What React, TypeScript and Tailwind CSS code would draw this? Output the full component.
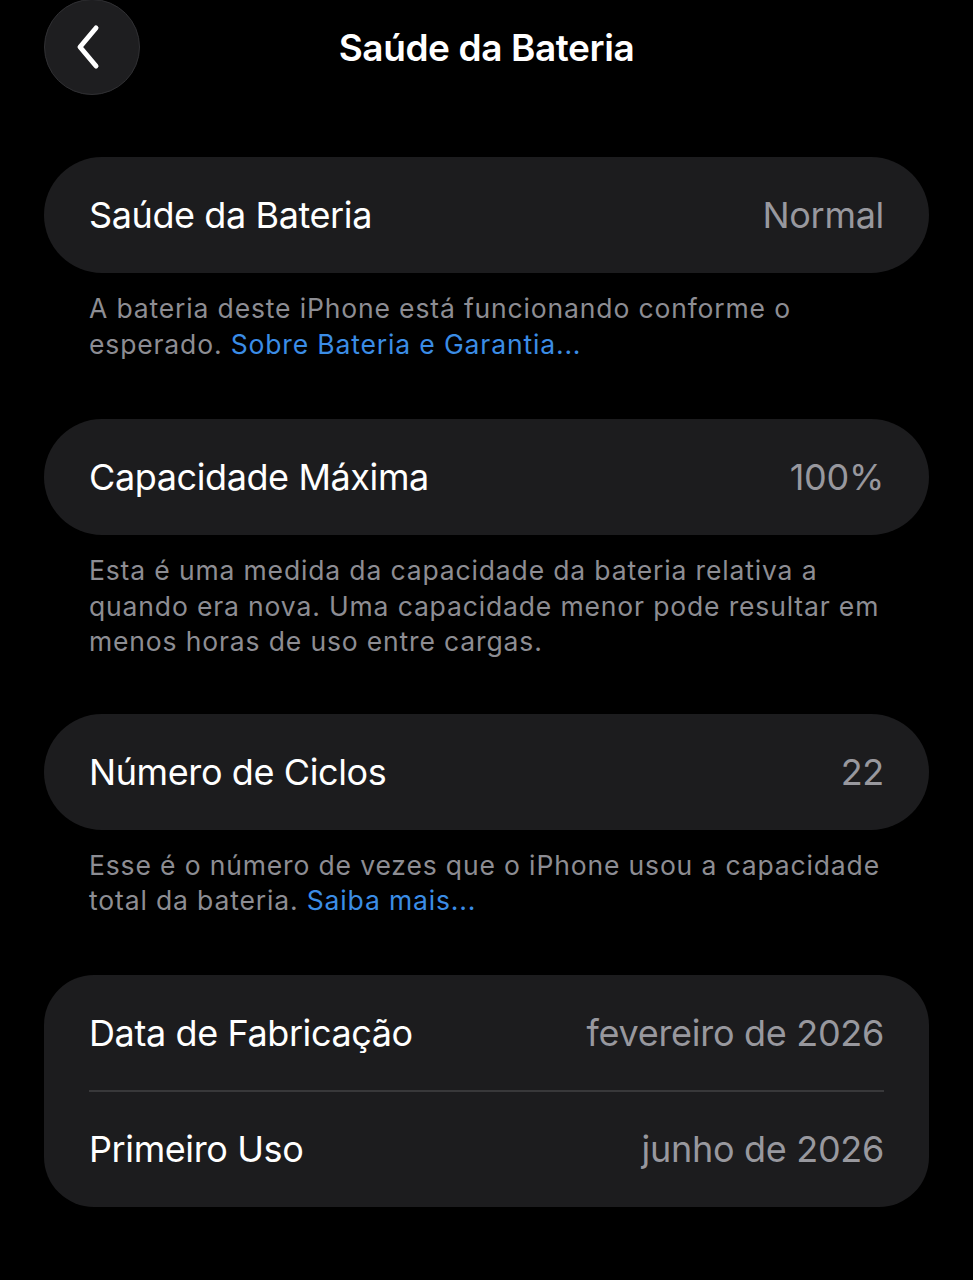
import React from "react";

const font = { fontFamily: "Inter, 'Noto Sans', sans-serif" };

function Row({ label, value }: { label: string; value: string }) {
  return (
    <div className="flex items-center justify-between h-[116px] px-[45px]">
      <span className="text-white text-[36px] tracking-[-0.4px]">{label}</span>
      <span className="text-[#98989e] text-[36px] tracking-[-0.3px]">{value}</span>
    </div>
  );
}

function Foot({ children }: { children: React.ReactNode }) {
  return (
    <p className="pl-[45px] pr-[40px] mt-[18px] text-[26.5px] leading-[35.5px] text-[#8d8d93] tracking-[0.85px]">
      {children}
    </p>
  );
}

export default function App() {
  return (
    <div className="w-[973px] h-[1280px] bg-black overflow-hidden" style={font}>
      <div className="relative h-[157px]">
        <div className="absolute left-[44px] top-[-1px] w-[96px] h-[96px] rounded-full bg-[#1e1e20] border border-[#303033] flex items-center justify-center">
          <svg width="40" height="48" viewBox="0 0 40 48" className="-ml-[4px]">
            <path d="M26 5 L10 24 L26 43" fill="none" stroke="white" strokeWidth="5" strokeLinecap="round" strokeLinejoin="round" />
          </svg>
        </div>
        <div className="absolute left-0 right-0 top-[20px] text-center text-white font-semibold text-[37px] tracking-[-0.4px]">
          Saúde da Bateria
        </div>
      </div>
      <div className="px-[44px] flex flex-col">
        <div className="bg-[#1c1c1e] rounded-[58px]">
          <Row label="Saúde da Bateria" value="Normal" />
        </div>
        <Foot>
          A bateria deste iPhone está funcionando conforme o esperado.{" "}
          <span className="text-[#3b8de6]">Sobre Bateria e Garantia...</span>
        </Foot>
        <div className="bg-[#1c1c1e] rounded-[58px] mt-[57px]">
          <Row label="Capacidade Máxima" value="100%" />
        </div>
        <Foot>
          Esta é uma medida da capacidade da bateria relativa a quando era nova. Uma capacidade menor pode resultar em menos horas de uso entre cargas.
        </Foot>
        <div className="bg-[#1c1c1e] rounded-[58px] mt-[54px]">
          <Row label="Número de Ciclos" value="22" />
        </div>
        <Foot>
          Esse é o número de vezes que o iPhone usou a capacidade total da bateria.{" "}
          <span className="text-[#3b8de6]">Saiba mais...</span>
        </Foot>
        <div className="bg-[#1c1c1e] rounded-[50px] mt-[56px]">
          <Row label="Data de Fabricação" value="fevereiro de 2026" />
          <div className="mx-[45px] h-[2px] bg-[#38383a] -my-px" />
          <Row label="Primeiro Uso" value="junho de 2026" />
        </div>
      </div>
    </div>
  );
}
